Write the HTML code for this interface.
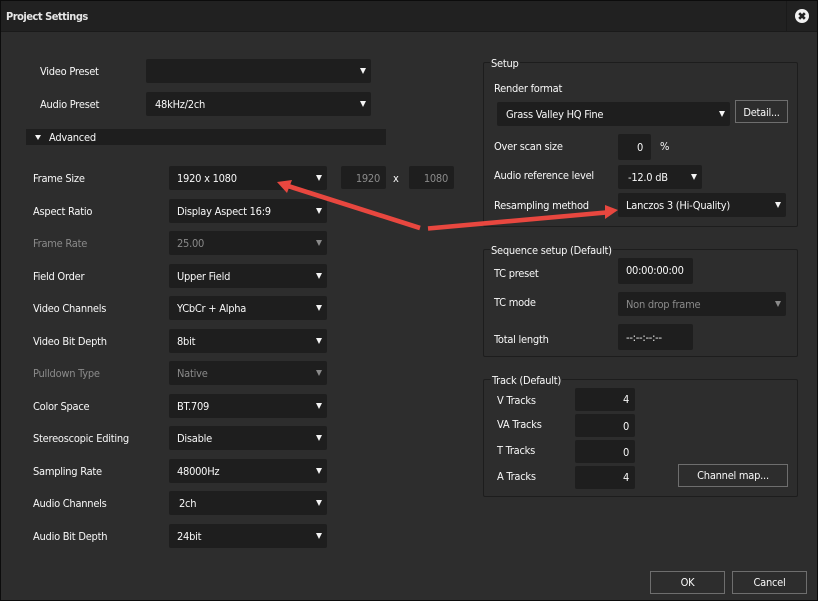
<!DOCTYPE html>
<html><head><meta charset="utf-8"><style>
html,body{margin:0;padding:0;background:#2d2d2d}
#p{position:relative;width:818px;height:601px;background:#2d2d2d;overflow:hidden;font:11px/18px "DejaVu Sans Condensed","DejaVu Sans","Liberation Sans",sans-serif;font-stretch:condensed;letter-spacing:-.25px;color:#f8f8f8}
#p div{position:absolute;box-sizing:border-box;white-space:nowrap}
.l{height:18px}
.g{color:#8a8a8a}
.b{background:#1e1e1e;border-radius:2px}
.b span{position:absolute;white-space:nowrap;line-height:18px}
.b i{position:absolute;width:0;height:0;border-left:3px solid transparent;border-right:3px solid transparent;border-top:6px solid #f4f4f4;top:9px;right:5px}
.b.d i{border-top-color:#8a8a8a}
.b.d span{color:#8a8a8a}
.gr{border:1px solid #1d1d1d;border-radius:2px}
.t{background:#2d2d2d;padding:0 1px}
.btn{border:1px solid #6e6e6e;text-align:center;line-height:21px}
.r{text-align:right}
</style></head><body><div id="p">
<div style="left:0;top:0;width:818px;height:32px;background:#212121;border-bottom:1px solid #1a1a1a"></div>
<div style="left:786px;top:0;width:1px;height:32px;background:#1a1a1a"></div>
<div class="l" style="left:6px;top:8px;font-weight:bold;color:#e6e6e6;letter-spacing:-.5px">Project Settings</div>
<svg style="position:absolute;left:795px;top:9px" width="14" height="14" viewBox="0 0 14 14"><circle cx="7" cy="7" r="7" fill="#f2f2f2"/><path d="M4.2 4.2L9.8 9.8M9.8 4.2L4.2 9.8" stroke="#222" stroke-width="2.6"/></svg>

<div class="l" style="left:40px;top:63px">Video Preset</div>
<div class="b" style="left:146px;top:59px;width:225px;height:24px"><i></i></div>
<div class="l" style="left:40px;top:96px">Audio Preset</div>
<div class="b" style="left:146px;top:92px;width:225px;height:24px"><span style="left:9px;top:4px">48kHz/2ch</span><i></i></div>
<div style="left:26px;top:129px;width:360px;height:16px;background:#1e1e1e"></div>
<div style="left:35px;top:135px;width:0;height:0;border-left:3px solid transparent;border-right:3px solid transparent;border-top:5px solid #f4f4f4"></div>
<div class="l" style="left:49px;top:129px">Advanced</div>

<div class="l" style="left:33px;top:170px">Frame Size</div>
<div class="b" style="left:169px;top:166px;width:158px;height:24px"><span style="left:8px;top:4px">1920 x 1080</span><i></i></div>
<div class="b g r" style="left:341px;top:166px;width:45px;height:23px;padding:4px 6px 0 0">1920</div>
<div class="l" style="left:393px;top:170px">x</div>
<div class="b g r" style="left:409px;top:166px;width:45px;height:23px;padding:4px 6px 0 0">1080</div>

<div class="l" style="left:33px;top:203px">Aspect Ratio</div>
<div class="b" style="left:169px;top:199px;width:158px;height:24px"><span style="left:8px;top:4px">Display Aspect 16:9</span><i></i></div>
<div class="l g" style="left:33px;top:235px">Frame Rate</div>
<div class="b d" style="left:169px;top:231px;width:158px;height:24px"><span style="left:8px;top:4px">25.00</span><i></i></div>
<div class="l" style="left:33px;top:268px">Field Order</div>
<div class="b" style="left:169px;top:264px;width:158px;height:24px"><span style="left:8px;top:4px">Upper Field</span><i></i></div>
<div class="l" style="left:33px;top:300px">Video Channels</div>
<div class="b" style="left:169px;top:296px;width:158px;height:24px"><span style="left:8px;top:4px">YCbCr + Alpha</span><i></i></div>
<div class="l" style="left:33px;top:333px">Video Bit Depth</div>
<div class="b" style="left:169px;top:329px;width:158px;height:24px"><span style="left:8px;top:4px">8bit</span><i></i></div>
<div class="l g" style="left:33px;top:365px">Pulldown Type</div>
<div class="b d" style="left:169px;top:361px;width:158px;height:24px"><span style="left:8px;top:4px">Native</span><i></i></div>
<div class="l" style="left:33px;top:398px">Color Space</div>
<div class="b" style="left:169px;top:394px;width:158px;height:24px"><span style="left:8px;top:4px">BT.709</span><i></i></div>
<div class="l" style="left:33px;top:430px">Stereoscopic Editing</div>
<div class="b" style="left:169px;top:426px;width:158px;height:24px"><span style="left:8px;top:4px">Disable</span><i></i></div>
<div class="l" style="left:33px;top:463px">Sampling Rate</div>
<div class="b" style="left:169px;top:459px;width:158px;height:24px"><span style="left:8px;top:4px">48000Hz</span><i></i></div>
<div class="l" style="left:33px;top:495px">Audio Channels</div>
<div class="b" style="left:169px;top:491px;width:158px;height:24px"><span style="left:10px;top:4px">2ch</span><i></i></div>
<div class="l" style="left:33px;top:528px">Audio Bit Depth</div>
<div class="b" style="left:169px;top:524px;width:158px;height:24px"><span style="left:8px;top:4px">24bit</span><i></i></div>

<div class="gr" style="left:483px;top:62px;width:315px;height:165px"></div>
<div class="l t" style="left:490px;top:55px">Setup</div>
<div class="l" style="left:494px;top:80px">Render format</div>
<div class="b" style="left:497px;top:102px;width:233px;height:24px"><span style="left:9px;top:4px">Grass Valley HQ Fine</span><i></i></div>
<div class="btn" style="left:735px;top:100px;width:53px;height:23px;line-height:23px">Detail...</div>
<div class="l" style="left:494px;top:138px">Over scan size</div>
<div class="b r" style="left:618px;top:134px;width:33px;height:26px;padding:5px 8px 0 0">0</div>
<div class="l" style="left:660px;top:138px">%</div>
<div class="l" style="left:494px;top:167px">Audio reference level</div>
<div class="b" style="left:618px;top:165px;width:84px;height:24px"><span style="left:10px;top:4px">-12.0 dB</span><i></i></div>
<div class="l" style="left:494px;top:197px">Resampling method</div>
<div class="b" style="left:618px;top:193px;width:168px;height:24px"><span style="left:8px;top:4px">Lanczos 3 (Hi-Quality)</span><i></i></div>

<div class="gr" style="left:483px;top:249px;width:315px;height:108px"></div>
<div class="l t" style="left:490px;top:242px">Sequence setup (Default)</div>
<div class="l" style="left:494px;top:265px">TC preset</div>
<div class="b" style="left:618px;top:258px;width:75px;height:26px"><span style="left:8px;top:4px">00:00:00:00</span></div>
<div class="l" style="left:494px;top:294px">TC mode</div>
<div class="b d" style="left:618px;top:292px;width:168px;height:24px"><span style="left:8px;top:4px">Non drop frame</span><i></i></div>
<div class="l" style="left:494px;top:331px">Total length</div>
<div class="b" style="left:618px;top:324px;width:75px;height:26px"><span style="left:8px;top:5px">--:--:--:--</span></div>

<div class="gr" style="left:483px;top:379px;width:315px;height:118px"></div>
<div class="l t" style="left:491px;top:372px">Track (Default)</div>
<div class="l" style="left:497px;top:392px">V Tracks</div>
<div class="b r" style="left:575px;top:388px;width:60px;height:23px;padding:3px 6px 0 0">4</div>
<div class="l" style="left:497px;top:416px">VA Tracks</div>
<div class="b r" style="left:575px;top:414px;width:60px;height:23px;padding:4px 6px 0 0">0</div>
<div class="l" style="left:497px;top:442px">T Tracks</div>
<div class="b r" style="left:575px;top:440px;width:60px;height:23px;padding:4px 6px 0 0">0</div>
<div class="l" style="left:497px;top:468px">A Tracks</div>
<div class="b r" style="left:575px;top:466px;width:60px;height:23px;padding:3px 6px 0 0">4</div>
<div class="btn" style="left:678px;top:464px;width:110px;height:23px">Channel map...</div>

<div class="btn" style="left:650px;top:571px;width:75px;height:23px">OK</div>
<div class="btn" style="left:732px;top:571px;width:75px;height:23px">Cancel</div>

<svg style="position:absolute;left:0;top:0" width="818" height="601">
<path d="M428 228.5L606 212.5" stroke="#e8473f" stroke-width="4.6" fill="none"/>
<path d="M618 210L605 205L605 219Z" fill="#e8473f"/>
<path d="M420 228L288 186" stroke="#e8473f" stroke-width="4.6" fill="none"/>
<path d="M277 182L292 180L287 193Z" fill="#e8473f"/>
</svg>
<div style="left:0;top:0;width:818px;height:601px;border:1px solid #0c0c0c"></div>
</div></body></html>
